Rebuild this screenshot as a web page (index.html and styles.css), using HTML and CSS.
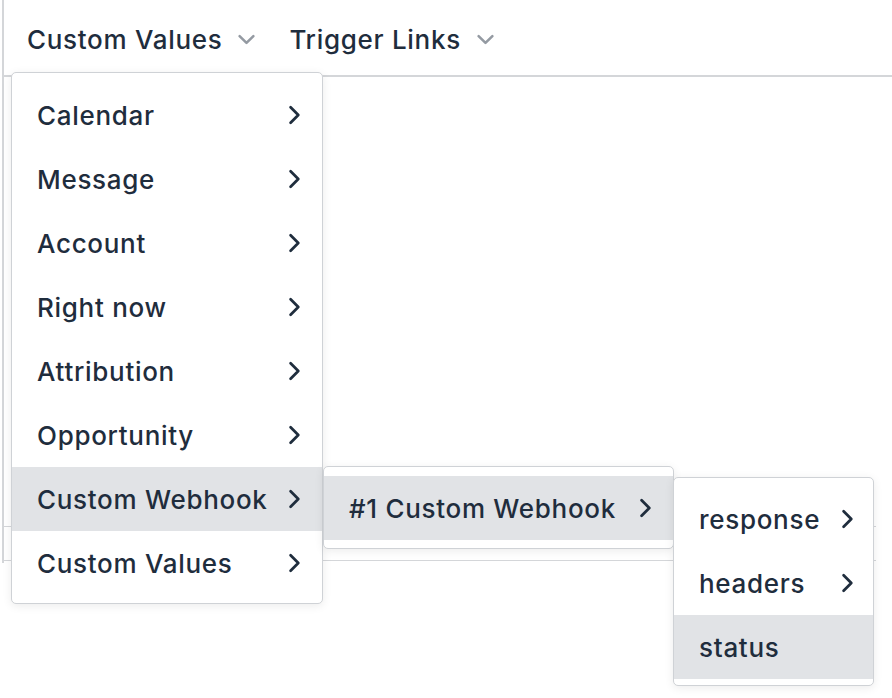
FILE: index.html
```html
<!DOCTYPE html>
<html>
<head>
<meta charset="utf-8">
<link rel="stylesheet" href="styles.css">
</head>
<body>
<div class="page">
  <div class="toolbar">
    <div class="tool">Custom Values <svg class="caret" viewBox="0 0 20 20"><path d="M4 7l6 6 6-6"/></svg></div>
    <div class="tool">Trigger Links <svg class="caret" viewBox="0 0 20 20"><path d="M4 7l6 6 6-6"/></svg></div>
  </div>
  <div class="body">
    <div class="row-line"></div>
  </div>

  <div class="menu m1">
    <div class="item"><span>Calendar</span><svg class="chev" viewBox="0 0 12 20"><path d="M2 3l7 7-7 7"/></svg></div>
    <div class="item"><span>Message</span><svg class="chev" viewBox="0 0 12 20"><path d="M2 3l7 7-7 7"/></svg></div>
    <div class="item"><span>Account</span><svg class="chev" viewBox="0 0 12 20"><path d="M2 3l7 7-7 7"/></svg></div>
    <div class="item"><span>Right now</span><svg class="chev" viewBox="0 0 12 20"><path d="M2 3l7 7-7 7"/></svg></div>
    <div class="item"><span>Attribution</span><svg class="chev" viewBox="0 0 12 20"><path d="M2 3l7 7-7 7"/></svg></div>
    <div class="item"><span>Opportunity</span><svg class="chev" viewBox="0 0 12 20"><path d="M2 3l7 7-7 7"/></svg></div>
    <div class="item active"><span>Custom Webhook</span><svg class="chev" viewBox="0 0 12 20"><path d="M2 3l7 7-7 7"/></svg></div>
    <div class="item"><span>Custom Values</span><svg class="chev" viewBox="0 0 12 20"><path d="M2 3l7 7-7 7"/></svg></div>
  </div>

  <div class="menu m2">
    <div class="item active"><span>#1 Custom Webhook</span><svg class="chev" viewBox="0 0 12 20"><path d="M2 3l7 7-7 7"/></svg></div>
  </div>

  <div class="menu m3">
    <div class="item"><span>response</span><svg class="chev" viewBox="0 0 12 20"><path d="M2 3l7 7-7 7"/></svg></div>
    <div class="item"><span>headers</span><svg class="chev" viewBox="0 0 12 20"><path d="M2 3l7 7-7 7"/></svg></div>
    <div class="item active"><span>status</span></div>
  </div>
</div>
</body>
</html>
```
FILE: styles.css
```css
html, body {
  margin: 0;
  padding: 0;
  background: #ffffff;
}
body {
  font-family: Inter, "Noto Sans", "Liberation Sans", sans-serif;
  color: #1f2d3d;
  width: 892px;
  height: 698px;
  overflow: hidden;
}
.page {
  position: relative;
  width: 892px;
  height: 698px;
}
.toolbar {
  display: flex;
  align-items: center;
  gap: 31px;
  margin-left: 2px;
  padding-left: 23px;
  padding-top: 4px;
  border-left: 2px solid #d4d6d9;
  border-bottom: 2px solid #d4d6d9;
  box-sizing: border-box;
  height: 77px;
}
.tool {
  display: flex;
  align-items: center;
  gap: 13px;
  font-size: 26px;
  font-weight: 500;
  letter-spacing: 0.7px;
}
.caret {
  width: 23px;
  height: 23px;
  fill: none;
  stroke: #949aa2;
  stroke-width: 2.2;
  stroke-linecap: round;
  stroke-linejoin: round;
}
.body {
  margin-left: 2px;
  border-left: 2px solid #d4d6d9;
  height: 486px;
  box-sizing: border-box;
  padding-top: 449px;
}
.row-line {
  height: 35px;
  width: 872px;
  border-top: 1px solid #d4d6d9;
  border-bottom: 1px solid #d4d6d9;
  box-sizing: border-box;
}
.menu {
  position: absolute;
  background: #ffffff;
  border: 1px solid #cfd2d6;
  border-radius: 5px;
  box-shadow: 0 2px 10px rgba(0,0,0,0.08);
  box-sizing: border-box;
  display: flex;
  flex-direction: column;
}
.m1 {
  left: 11px;
  top: 72px;
  width: 312px;
  padding: 10px 0 8px;
}
.m2 {
  left: 323px;
  top: 466px;
  width: 351px;
  padding: 9px 0 8px;
}
.m3 {
  left: 673px;
  top: 477px;
  width: 201px;
  padding: 9px 0 6px;
}
.item {
  height: 64px;
  display: flex;
  align-items: center;
  justify-content: space-between;
  font-size: 26px;
  font-weight: 500;
  padding: 0 20px 0 25px;
  letter-spacing: 0.7px;
}
.item.active {
  background: #e1e3e6;
}
.m2 .item {
  padding-right: 20px;
}
.m3 .item {
  padding-right: 18px;
}
.chev {
  width: 14px;
  height: 22px;
  fill: none;
  stroke: #1f2d3d;
  stroke-width: 2.5;
  stroke-linecap: round;
  stroke-linejoin: round;
}
```
